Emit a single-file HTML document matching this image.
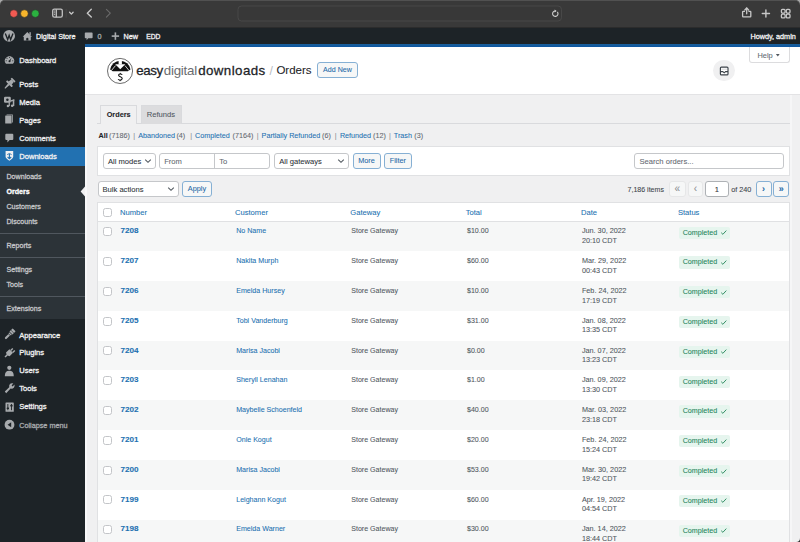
<!DOCTYPE html>
<html><head><meta charset="utf-8"><title>Orders</title>
<style>
html,body{margin:0;padding:0}
body{-webkit-text-stroke:0.07px;width:800px;height:542px;overflow:hidden;position:relative;background:#f0f0f1;font-family:"Liberation Sans",sans-serif}
.abs{position:absolute}
.t{position:absolute;white-space:nowrap;height:12px;line-height:12px}
#safari{position:absolute;left:0;top:0;width:800px;height:27.8px;background:#393939;border-radius:5px 5px 0 0;box-shadow:inset 0 0.8px 0 #5a5a5a}
#adminbar{position:absolute;left:0;top:27.8px;width:800px;height:16.2px;background:#1d2327}
#sidebar{position:absolute;left:0;top:44px;width:85px;height:498px;background:#1d2327}
.btn{position:absolute;box-sizing:border-box;border:1px solid #86b0d4;background:#f6f7f7;color:#1f6aa8;border-radius:3px;text-align:center;white-space:nowrap}
.pg{font-size:9px;line-height:14px;font-weight:700}
.pgd{box-sizing:border-box;border:1px solid #e6e7e8;background:#f6f7f7;color:#8c8f94;border-radius:3px;text-align:center;font-size:10px;line-height:14px}
.inp{box-sizing:border-box;border:1px solid #c5c7ca;background:#fff;border-radius:3px}
.cb{width:9px;height:9px;box-sizing:border-box;border:1px solid #c3c5c8;border-radius:2.5px;background:#fff}
.sub{color:#50575e}
.sub a{color:#2271b1}
.sub .c{color:#646970}
.sub .sep{color:#a7aaad;padding:0 1px}
.badge{height:12.3px;width:50.6px;background:#e6f5ee;border-radius:2px}
.ck{font-size:6.5px}
</style></head><body>
<div class="abs" style="left:0;top:0;width:800px;height:8px;background:#a9a9a9"></div>
<div id="safari"></div>
<svg class="abs" style="left:0;top:0" width="800" height="28" viewBox="0 0 800 28">
<circle cx="13.8" cy="13.6" r="3.8" fill="#f25a52" stroke="#2a2a2a" stroke-width="0.5"/>
<circle cx="24.4" cy="13.6" r="3.8" fill="#f6b42c" stroke="#2a2a2a" stroke-width="0.5"/>
<circle cx="35.3" cy="13.6" r="3.8" fill="#2bb140" stroke="#2a2a2a" stroke-width="0.5"/>
<g fill="none" stroke="#c2c2c2" stroke-width="1.3">
<rect x="52.7" y="9.2" width="9.6" height="8" rx="1.6"/>
<line x1="56.3" y1="9.2" x2="56.3" y2="17.2"/>
</g>
<g fill="#c2c2c2"><rect x="53.9" y="10.6" width="1.3" height="0.9"/><rect x="53.9" y="12.4" width="1.3" height="0.9"/><rect x="53.9" y="14.2" width="1.3" height="0.9"/></g>
<g fill="none" stroke="#c8c8c8" stroke-width="1.35" stroke-linecap="round" stroke-linejoin="round">
<polyline points="69.6,12.3 71.35,14.1 73.1,12.3"/>
<polyline points="91.3,9.3 87.3,13.2 91.3,17.1"/>
</g>
<polyline points="106.4,9.3 110.3,13.2 106.4,17.1" fill="none" stroke="#6b6b6b" stroke-width="1.1" stroke-linecap="round" stroke-linejoin="round"/>
<line x1="66.1" y1="8.8" x2="66.1" y2="17.8" stroke="#4a4a4a" stroke-width="0.8"/>
<rect x="238" y="6" width="323.5" height="15" rx="3.5" fill="#383838" stroke="#4b4b4b" stroke-width="0.9"/>
<g fill="none" stroke="#cfcfcf" stroke-width="1.1" stroke-linecap="round">
<path d="M557.6 12.3 A2.7 2.7 0 1 1 555.4 11"/>
</g>
<path d="M554.6 9.6 L556.6 11 L554.6 12.4 Z" fill="#cfcfcf"/>
<g fill="none" stroke="#c8c8c8" stroke-width="1.3" stroke-linecap="round" stroke-linejoin="round">
<path d="M744.4 11.4 H743.2 Q742.6 11.4 742.6 12 V16.2 Q742.6 16.8 743.2 16.8 H750.2 Q750.8 16.8 750.8 16.2 V12 Q750.8 11.4 750.2 11.4 H749"/>
<line x1="746.7" y1="8.2" x2="746.7" y2="13.8"/>
<polyline points="744.8,10 746.7,8 748.6,10"/>
<line x1="765.9" y1="9.9" x2="765.9" y2="17.1" stroke-width="1.4"/>
<line x1="762.3" y1="13.5" x2="769.5" y2="13.5" stroke-width="1.4"/>
<rect x="781.4" y="9.4" width="3.7" height="3.7" rx="1"/>
<rect x="786.3" y="9.4" width="3.7" height="3.7" rx="1"/>
<rect x="781.4" y="14.2" width="3.7" height="3.7" rx="1"/>
<rect x="786.3" y="14.2" width="3.7" height="3.7" rx="1"/>
</g>
<rect x="0" y="27.2" width="800" height="0.8" fill="#2a2a2a"/>
</svg>
<div id="adminbar"></div>
<svg class="abs" style="left:0;top:27px" width="800" height="17" viewBox="0 27 800 17">
<circle cx="9.1" cy="35.9" r="5.9" fill="#a7aaad"/>
<path d="M5.3 33.4 L7.7 39.6 L9.15 35.4 L10.6 39.6 L13 33.4" fill="none" stroke="#1d2327" stroke-width="1.35" stroke-linejoin="miter"/>
<path d="M22.7 36.8 L27.3 32 L31.9 36.8 H30.8 V40.6 H23.8 V36.8 Z" fill="#a7aaad"/>
<rect x="29.4" y="32.2" width="1.4" height="2.8" fill="#a7aaad"/>
<path d="M26.2 40.6 V38.8 A1.1 1.1 0 0 1 28.4 38.8 V40.6 Z" fill="#1d2327"/>
<path d="M84.8 33.2 Q84.8 32.4 85.6 32.4 H91.8 Q92.6 32.4 92.6 33.2 V37.4 Q92.6 38.2 91.8 38.2 H88.2 L86.6 40.2 V38.2 H85.6 Q84.8 38.2 84.8 37.4 Z" fill="#a7aaad"/>
<rect x="114.6" y="32.4" width="1.6" height="7.4" fill="#a7aaad"/>
<rect x="111.7" y="35.3" width="7.4" height="1.6" fill="#a7aaad"/>
</svg>
<div class="t" style="left:36px;top:31.10px;font-size:7.25px;color:#f0f0f1;font-weight:400;-webkit-text-stroke:0.3px">Digital Store</div>

<div class="t" style="left:97.4px;top:31.10px;font-size:7.25px;color:#a7aaad;font-weight:400;-webkit-text-stroke:0.3px">0</div>

<div class="t" style="left:123.6px;top:31.10px;font-size:7.25px;color:#f0f0f1;font-weight:400;-webkit-text-stroke:0.3px">New</div>

<div class="t" style="left:146.2px;top:31.10px;font-size:6.7px;color:#f0f0f1;font-weight:400;-webkit-text-stroke:0.3px">EDD</div>

<div class="t" style="left:750.4px;top:31.10px;font-size:7.25px;color:#f0f0f1;font-weight:400;-webkit-text-stroke:0.3px">Howdy, admin</div>

<div id="sidebar"></div>
<div class="abs" style="left:0;top:147.3px;width:85px;height:18.3px;background:#2271b1"></div>
<div class="abs" style="left:0;top:165.6px;width:85px;height:153.8px;background:#2c3338"></div>
<div class="abs" style="left:0;top:233px;width:85px;height:0.8px;background:#50575e"></div>
<div class="abs" style="left:0;top:257px;width:85px;height:0.8px;background:#50575e"></div>
<div class="abs" style="left:0;top:295.5px;width:85px;height:0.8px;background:#50575e"></div>
<svg class="abs" style="left:80px;top:186px" width="6" height="11" viewBox="0 0 6 11"><path d="M5 0.6 L0.6 5.5 L5 10.4 Z" fill="#f0f0f1"/></svg>
<div class="t" style="left:19.2px;top:54.70px;font-size:7.6px;color:#f0f0f1;font-weight:400;-webkit-text-stroke:0.3px">Dashboard</div>

<div class="t" style="left:19.2px;top:78.50px;font-size:7.6px;color:#f0f0f1;font-weight:400;-webkit-text-stroke:0.3px">Posts</div>

<div class="t" style="left:19.2px;top:96.70px;font-size:7.6px;color:#f0f0f1;font-weight:400;-webkit-text-stroke:0.3px">Media</div>

<div class="t" style="left:19.2px;top:115.00px;font-size:7.6px;color:#f0f0f1;font-weight:400;-webkit-text-stroke:0.3px">Pages</div>

<div class="t" style="left:19.2px;top:132.80px;font-size:7.6px;color:#f0f0f1;font-weight:400;-webkit-text-stroke:0.3px">Comments</div>

<div class="t" style="left:19.2px;top:151.10px;font-size:7.6px;color:#f0f0f1;font-weight:400;-webkit-text-stroke:0.3px">Downloads</div>

<div class="t" style="left:19.2px;top:329.60px;font-size:7.6px;color:#f0f0f1;font-weight:400;-webkit-text-stroke:0.3px">Appearance</div>

<div class="t" style="left:19.2px;top:347.20px;font-size:7.6px;color:#f0f0f1;font-weight:400;-webkit-text-stroke:0.3px">Plugins</div>

<div class="t" style="left:19.2px;top:365.40px;font-size:7.6px;color:#f0f0f1;font-weight:400;-webkit-text-stroke:0.3px">Users</div>

<div class="t" style="left:19.2px;top:383.40px;font-size:7.6px;color:#f0f0f1;font-weight:400;-webkit-text-stroke:0.3px">Tools</div>

<div class="t" style="left:19.2px;top:401.40px;font-size:7.6px;color:#f0f0f1;font-weight:400;-webkit-text-stroke:0.3px">Settings</div>

<div class="t" style="left:19.2px;top:419.60px;font-size:7.25px;color:#a7aaad;font-weight:400;-webkit-text-stroke:0.3px">Collapse menu</div>

<div class="t" style="left:6.5px;top:171.30px;font-size:7.1px;color:#c3c4c7;font-weight:400;-webkit-text-stroke:0.3px">Downloads</div>

<div class="t" style="left:6.5px;top:186.10px;font-size:7.1px;color:#ffffff;font-weight:700;-webkit-text-stroke:0.3px">Orders</div>

<div class="t" style="left:6.5px;top:201.10px;font-size:7.1px;color:#c3c4c7;font-weight:400;-webkit-text-stroke:0.3px">Customers</div>

<div class="t" style="left:6.5px;top:215.90px;font-size:7.1px;color:#c3c4c7;font-weight:400;-webkit-text-stroke:0.3px">Discounts</div>

<div class="t" style="left:6.5px;top:239.80px;font-size:7.1px;color:#c3c4c7;font-weight:400;-webkit-text-stroke:0.3px">Reports</div>

<div class="t" style="left:6.5px;top:263.80px;font-size:7.1px;color:#c3c4c7;font-weight:400;-webkit-text-stroke:0.3px">Settings</div>

<div class="t" style="left:6.5px;top:278.50px;font-size:7.1px;color:#c3c4c7;font-weight:400;-webkit-text-stroke:0.3px">Tools</div>

<div class="t" style="left:6.5px;top:302.50px;font-size:7.1px;color:#c3c4c7;font-weight:400;-webkit-text-stroke:0.3px">Extensions</div>

<svg class="abs" style="left:0;top:44px" width="20" height="400" viewBox="0 44 20 400">
<g fill="#a7aaad">
<path d="M6 63.8 A4.6 4.6 0 1 1 13 63.8 Z"/>
</g>
<g fill="#1d2327">
<circle cx="9.5" cy="61.2" r="1"/><path d="M9 61 L11.6 57.4 L10.1 61.5 Z"/>
<circle cx="9.5" cy="57.2" r="0.55"/><circle cx="7" cy="58.3" r="0.55"/><circle cx="6.2" cy="60.8" r="0.55"/><circle cx="12.8" cy="60.8" r="0.55"/>
</g>
<g fill="#a7aaad" transform="translate(9.5 83.7) rotate(45)">
<rect x="-2.6" y="-6" width="5.2" height="1.9" rx="0.5"/>
<path d="M-1.7 -4.2 L1.7 -4.2 L2.3 -0.6 L-2.3 -0.6 Z"/>
<rect x="-4" y="-0.9" width="8" height="1.9" rx="0.5"/>
<path d="M-1.1 0.9 L1.1 0.9 L0.5 6.6 L-0.5 6.6 Z"/>
</g>
<g fill="#a7aaad">
<path d="M4 98 Q4 96.8 5.2 96.8 H9.6 Q10.8 96.8 10.8 98 V101.6 Q10.8 102.8 9.6 102.8 H5.2 Q4 102.8 4 101.6 Z"/>
<rect x="12.8" y="99.6" width="1.5" height="6.4"/>
<path d="M10.6 100.2 L14.3 99.2 V100.8 L10.6 101.8 Z"/>
<circle cx="12.2" cy="105.8" r="1.3"/>
<rect x="8.6" y="102.2" width="1.3" height="4"/>
<circle cx="7.9" cy="106" r="1.2"/>
</g>
<circle cx="7.4" cy="99.8" r="1.25" fill="#1d2327"/>
<g fill="#a7aaad">
<rect x="5.2" y="115.6" width="6.4" height="8" rx="0.5"/>
<path d="M6.6 114.4 H12.8 V122.6 H12 V115.2 H6.6 Z"/>
<path d="M5.3 134.8 Q5.3 133.8 6.3 133.8 H12.3 Q13.3 133.8 13.3 134.8 V139 Q13.3 140 12.3 140 H9.6 L7.4 142.4 V140 H6.3 Q5.3 140 5.3 139 Z"/>
</g>
<path d="M5.6 151 H13.2 V156.6 Q13.2 158.6 9.4 160.8 Q5.6 158.6 5.6 156.6 Z" fill="#f0f0f1"/>
<path d="M7.2 154.6 Q9.4 152.4 11.6 154.6" fill="none" stroke="#2271b1" stroke-width="0.9"/>
<path d="M9.4 154 V158.6 M7.6 157 L9.4 158.8 L11.2 157" fill="none" stroke="#2271b1" stroke-width="1.1"/>
<g fill="#a7aaad">
<g transform="translate(9.6 334.4) rotate(45)" fill="#a7aaad">
<rect x="-2.1" y="-6.4" width="4.2" height="4.6" rx="0.5"/>
<rect x="-1.7" y="-1.5" width="3.4" height="1.4"/>
<rect x="-1.05" y="0.2" width="2.1" height="6" rx="1"/>
</g>
<g transform="translate(9.6 334.4) rotate(45)" fill="#1d2327"><rect x="-2.1" y="-4.2" width="4.2" height="0.45"/><rect x="-2.1" y="-1.8" width="4.2" height="0.35"/></g>
<g fill="#a7aaad">
<path d="M4.5 356.6 L6.6 354.5 L6 352.6 L9.4 349.2 L13 352.8 L9.6 356.2 L7.6 355.6 L5.6 357.4 Z"/>
<path d="M10.2 350 L12.3 347.9 L13.3 348.9 L11.2 351 Z"/>
<path d="M12.2 352 L14.3 349.9 L15.3 350.9 L13.2 353 Z"/>
<circle cx="9.3" cy="367.8" r="2.1"/>
<path d="M4.8 376.2 Q4.8 370.8 9.3 370.8 Q13.8 370.8 13.8 376.2 Z"/>
<path d="M4.8 391.6 L9.2 387.2 Q8.6 384.8 10.6 383.6 Q12 382.8 13.4 383.4 L11.6 385.2 L12.6 386.4 L14.5 384.6 Q14.9 386.2 14 387.4 Q12.6 389.2 10.6 388.6 L6.2 393.2 Z"/>
<rect x="5.5" y="402.4" width="8.3" height="9.4" rx="0.6"/>
<circle cx="9.5" cy="424.7" r="4.9"/>
</g>
<g fill="#1d2327">
<rect x="7.4" y="404" width="0.9" height="6.2"/><rect x="11" y="404" width="0.9" height="6.2"/>
<rect x="6.7" y="407.4" width="2.3" height="1.6" rx="0.5"/><rect x="10.3" y="404.8" width="2.3" height="1.6" rx="0.5"/>
<path d="M11.2 422.2 L7.6 424.7 L11.2 427.2 Z"/>
</g>
</svg>
<div class="abs" style="left:85px;top:44px;width:715px;height:2.8px;background:linear-gradient(#1d5f98,#0b56a2)"></div>
<div class="abs" style="left:85px;top:46.6px;width:715px;height:47px;background:#fff;border-bottom:1px solid #e3e3e5"></div>
<div class="abs" style="left:85px;top:94.6px;width:2.4px;height:448px;background:#f8f8f9"></div>
<svg class="abs" style="left:105px;top:55px" width="32" height="32" viewBox="105 55 32 32">
<circle cx="120.05" cy="70.95" r="12.55" fill="#fff" stroke="#505050" stroke-width="0.85"/>
<path d="M110.1 69.6 A10.3 10.3 0 0 1 130.5 69.6 L127.9 71.3 L112.7 71.3 Z" fill="#111"/>
<rect x="118.6" y="59.5" width="3.3" height="5" fill="#fff"/>
<path d="M115.2 64.2 L125.3 64.2 L120.25 69.3 Z" fill="#fff"/>
<path d="M111.4 70.6 L115.5 65.6 M129.1 70.6 L125 65.6" stroke="#fff" stroke-width="0.8"/>
<path d="M122.3 74.6 Q120.8 73.5 119.2 74.2 Q117.9 75.2 119.4 76.3 L121.5 77.4 Q123 78.6 121.4 79.8 Q119.7 80.6 118 79.4" fill="none" stroke="#111" stroke-width="1.05"/>
<path d="M120.3 72.9 V74 M120.1 80 V81.2" stroke="#111" stroke-width="0.9"/>
</svg>
<div class="t" style="left:136.2px;top:63.2px;font-size:13.3px;line-height:15px;height:15px;color:#1d2327"><span style="-webkit-text-stroke:0.28px #1d2327;letter-spacing:-0.4px">easy</span><span style="color:#6a6d70;-webkit-text-stroke:0;letter-spacing:-0.2px;margin-left:1px">digital</span><span style="-webkit-text-stroke:0.28px #1d2327;letter-spacing:0.42px;margin-left:1.2px">downloads</span></div>
<div class="t" style="left:269.6px;top:64.50px;font-size:12.2px;color:#b9bcbf;font-weight:400;-webkit-text-stroke:0">/</div>

<div class="t" style="left:276.4px;top:64.40px;font-size:11.5px;color:#1d2327;font-weight:400;">Orders</div>

<div class="btn" style="left:317px;top:61.6px;width:41px;height:16px;font-size:7.1px;line-height:15.9px">Add New</div>
<div class="abs" style="left:748.5px;top:46.6px;width:41px;height:16.6px;background:#fff;border:1px solid #dcdcde;border-top:0;border-radius:0 0 3px 3px;box-sizing:border-box"></div>
<div class="t" style="left:757.5px;top:49.60px;font-size:7.4px;color:#646970;font-weight:400;">Help</div>

<svg class="abs" style="left:775px;top:53px" width="6" height="5"><path d="M0.9 1.1 H4.7 L2.8 3.6 Z" fill="#50575e"/></svg>
<div class="abs" style="left:713px;top:59.7px;width:21.8px;height:21.8px;border-radius:50%;background:#f0f0f1"></div>
<svg class="abs" style="left:713px;top:60px" width="22" height="22" viewBox="0 0 22 22">
<rect x="7.4" y="7.1" width="7.6" height="7.8" rx="1" fill="#fff" stroke="#3c434a" stroke-width="1.15"/>
<rect x="8.4" y="8.6" width="5.6" height="1.2" fill="#dcdcde"/>
<path d="M7.4 11.6 H9.8 L11.2 12.9 L12.6 11.6 H15" fill="none" stroke="#3c434a" stroke-width="1.05"/>
</svg>
<div class="abs" style="left:97px;top:123.4px;width:692.5px;height:1px;background:#d9dadd"></div>
<div class="abs" style="left:100.4px;top:105px;width:36.8px;height:19.4px;background:#f0f0f1;border:1px solid #d9dadd;border-bottom:0;box-sizing:border-box"></div>
<div class="abs" style="left:141px;top:105px;width:40.8px;height:18.6px;background:#dcdcde;border:1px solid #d9dadd;border-bottom:0;box-sizing:border-box"></div>
<div class="t" style="left:106.7px;top:108.70px;font-size:7.3px;color:#1d2327;font-weight:700;">Orders</div>

<div class="t" style="left:146.8px;top:108.70px;font-size:7.6px;color:#50575e;font-weight:400;">Refunds</div>

<div class="t" style="left:98.5px;top:129.90px;font-size:7.2px;color:#1d2327;font-weight:700;">All</div>

<div class="t" style="left:109px;top:129.90px;font-size:7.2px;color:#646970;font-weight:400;">(7186)</div>

<div class="t" style="left:133.2px;top:129.90px;font-size:7.2px;color:#8c8f94;font-weight:400;">|</div>

<div class="t" style="left:138.25px;top:129.90px;font-size:7.2px;color:#2271b1;font-weight:400;">Abandoned</div>

<div class="t" style="left:176.4px;top:129.90px;font-size:7.2px;color:#646970;font-weight:400;">(4)</div>

<div class="t" style="left:190.2px;top:129.90px;font-size:7.2px;color:#8c8f94;font-weight:400;">|</div>

<div class="t" style="left:195px;top:129.90px;font-size:7.2px;color:#2271b1;font-weight:400;">Completed</div>

<div class="t" style="left:232.6px;top:129.90px;font-size:7.2px;color:#646970;font-weight:400;">(7164)</div>

<div class="t" style="left:256.8px;top:129.90px;font-size:7.2px;color:#8c8f94;font-weight:400;">|</div>

<div class="t" style="left:261.6px;top:129.90px;font-size:7.2px;color:#2271b1;font-weight:400;">Partially Refunded</div>

<div class="t" style="left:322px;top:129.90px;font-size:7.2px;color:#646970;font-weight:400;">(6)</div>

<div class="t" style="left:334.8px;top:129.90px;font-size:7.2px;color:#8c8f94;font-weight:400;">|</div>

<div class="t" style="left:339.9px;top:129.90px;font-size:7.2px;color:#2271b1;font-weight:400;">Refunded</div>

<div class="t" style="left:373px;top:129.90px;font-size:7.2px;color:#646970;font-weight:400;">(12)</div>

<div class="t" style="left:389.1px;top:129.90px;font-size:7.2px;color:#8c8f94;font-weight:400;">|</div>

<div class="t" style="left:393.8px;top:129.90px;font-size:7.2px;color:#2271b1;font-weight:400;">Trash</div>

<div class="t" style="left:414.3px;top:129.90px;font-size:7.2px;color:#646970;font-weight:400;">(3)</div>

<div class="abs" style="left:97px;top:146.3px;width:692.5px;height:29.8px;background:#fff;border:1px solid #e0e1e3;box-sizing:border-box"></div>
<div class="abs inp" style="left:103px;top:153px;width:52.5px;height:15.800000000000011px"></div><div class="t" style="left:108px;top:155.60px;font-size:7.6px;color:#2c3338;font-weight:400;">All modes</div>
<svg class="abs" style="left:143.5px;top:157.9px" width="8" height="6"><polyline points="1.2,1.7 4,4.3 6.8,1.7" fill="none" stroke="#50575e" stroke-width="1.1"/></svg>
<div class="abs inp" style="left:159.2px;top:153px;width:110.8px;height:15.8px"></div>
<div class="abs" style="left:214.4px;top:153px;width:0.9px;height:15.8px;background:#c5c7ca"></div>
<div class="t" style="left:164.2px;top:155.60px;font-size:7.6px;color:#646970;font-weight:400;">From</div>

<div class="t" style="left:219.2px;top:155.60px;font-size:7.6px;color:#646970;font-weight:400;">To</div>

<div class="abs inp" style="left:274.2px;top:153px;width:74.60000000000002px;height:15.800000000000011px"></div><div class="t" style="left:279.2px;top:155.60px;font-size:7.6px;color:#2c3338;font-weight:400;">All gateways</div>
<svg class="abs" style="left:336.8px;top:157.9px" width="8" height="6"><polyline points="1.2,1.7 4,4.3 6.8,1.7" fill="none" stroke="#50575e" stroke-width="1.1"/></svg>
<div class="btn" style="left:352.5px;top:153px;width:28px;height:15.8px;font-size:7.3px;line-height:14.9px">More</div>
<div class="btn" style="left:383.8px;top:153px;width:28px;height:15.8px;font-size:7.3px;line-height:14.9px">Filter</div>
<div class="abs inp" style="left:634.2px;top:153px;width:149.5px;height:15.8px"></div>
<div class="t" style="left:639.5px;top:155.60px;font-size:7.6px;color:#646970;font-weight:400;">Search orders...</div>

<div class="abs inp" style="left:97.5px;top:181.2px;width:81.30000000000001px;height:15.800000000000011px"></div><div class="t" style="left:102.5px;top:183.80px;font-size:7.6px;color:#2c3338;font-weight:400;">Bulk actions</div>
<svg class="abs" style="left:166.8px;top:186.1px" width="8" height="6"><polyline points="1.2,1.7 4,4.3 6.8,1.7" fill="none" stroke="#50575e" stroke-width="1.1"/></svg>
<div class="btn" style="left:182px;top:181.2px;width:30px;height:15.8px;font-size:7.3px;line-height:14.9px">Apply</div>
<div class="t" style="left:627.5px;top:183.80px;font-size:7.05px;color:#3c434a;font-weight:400;">7,186 items</div>

<div class="abs pgd" style="left:668.8px;top:181.2px;width:16.8px;height:15.8px">&laquo;</div>
<div class="abs pgd" style="left:687.5px;top:181.2px;width:15.6px;height:15.8px">&lsaquo;</div>
<div class="abs inp" style="left:705px;top:181px;width:23.6px;height:16.2px;border-color:#aeb1b5;text-align:center;font-size:7.6px;line-height:15.4px;color:#2c3338">1</div>
<div class="t" style="left:731.2px;top:183.80px;font-size:7.25px;color:#3c434a;font-weight:400;">of 240</div>

<div class="btn pg" style="left:755.5px;top:181.2px;width:16.2px;height:15.8px">&rsaquo;</div>
<div class="btn pg" style="left:773.2px;top:181.2px;width:16px;height:15.8px">&raquo;</div>
<div class="abs" style="left:97.4px;top:202.4px;width:692.2px;height:400px;background:#fff;border:1px solid #e0e1e3;box-sizing:border-box"></div>
<div class="abs" style="left:97.4px;top:220.6px;width:692.2px;height:1px;background:#e0e1e3"></div>
<div class="abs cb" style="left:103px;top:208px"></div>
<div class="t" style="left:120px;top:206.50px;font-size:7.6px;color:#2271b1;font-weight:400;">Number</div>

<div class="t" style="left:235px;top:206.50px;font-size:7.6px;color:#2271b1;font-weight:400;">Customer</div>

<div class="t" style="left:350.3px;top:206.50px;font-size:7.6px;color:#2271b1;font-weight:400;">Gateway</div>

<div class="t" style="left:465.7px;top:206.50px;font-size:7.6px;color:#2271b1;font-weight:400;">Total</div>

<div class="t" style="left:581px;top:206.50px;font-size:7.6px;color:#2271b1;font-weight:400;">Date</div>

<div class="t" style="left:677.9px;top:206.50px;font-size:7.6px;color:#2271b1;font-weight:400;">Status</div>

<div class="abs" style="left:98.3px;top:221.50px;width:690.4px;height:29.80px;background:#f6f7f7"></div>
<div class="abs cb" style="left:103px;top:227.20000000000002px"></div>
<div class="t" style="left:120.6px;top:225.40px;font-size:8.1px;color:#2271b1;font-weight:700;">7208</div>

<div class="t" style="left:236.2px;top:225.40px;font-size:7.1px;color:#2271b1;font-weight:400;">No Name</div>

<div class="t" style="left:351.3px;top:225.40px;font-size:7.05px;color:#50575e;font-weight:400;">Store Gateway</div>

<div class="t" style="left:467px;top:225.40px;font-size:7.05px;color:#50575e;font-weight:400;">$10.00</div>

<div class="t" style="left:581.9px;top:225.40px;font-size:7.25px;color:#50575e;font-weight:400;">Jun. 30, 2022</div>

<div class="t" style="left:581.9px;top:235.00px;font-size:7.25px;color:#50575e;font-weight:400;">20:10 CDT</div>

<div class="abs badge" style="left:679.3px;top:226.50px"></div>
<div class="t" style="left:682.7px;top:226.60px;font-size:7.15px;color:#22845a;font-weight:400;">Completed</div>

<svg class="abs" style="left:720px;top:229.20px" width="8" height="7" viewBox="0 0 8 7"><polyline points="1.2,3.7 2.9,5.3 6.3,1.6" fill="none" stroke="#2a8a5e" stroke-width="0.95"/></svg>
<div class="abs cb" style="left:103px;top:257.0px"></div>
<div class="t" style="left:120.6px;top:255.20px;font-size:8.1px;color:#2271b1;font-weight:700;">7207</div>

<div class="t" style="left:236.2px;top:255.20px;font-size:7.1px;color:#2271b1;font-weight:400;">Nakita Murph</div>

<div class="t" style="left:351.3px;top:255.20px;font-size:7.05px;color:#50575e;font-weight:400;">Store Gateway</div>

<div class="t" style="left:467px;top:255.20px;font-size:7.05px;color:#50575e;font-weight:400;">$60.00</div>

<div class="t" style="left:581.9px;top:255.20px;font-size:7.25px;color:#50575e;font-weight:400;">Mar. 29, 2022</div>

<div class="t" style="left:581.9px;top:264.80px;font-size:7.25px;color:#50575e;font-weight:400;">00:43 CDT</div>

<div class="abs badge" style="left:679.3px;top:256.30px"></div>
<div class="t" style="left:682.7px;top:256.40px;font-size:7.15px;color:#22845a;font-weight:400;">Completed</div>

<svg class="abs" style="left:720px;top:259.00px" width="8" height="7" viewBox="0 0 8 7"><polyline points="1.2,3.7 2.9,5.3 6.3,1.6" fill="none" stroke="#2a8a5e" stroke-width="0.95"/></svg>
<div class="abs" style="left:98.3px;top:281.10px;width:690.4px;height:29.80px;background:#f6f7f7"></div>
<div class="abs cb" style="left:103px;top:286.8px"></div>
<div class="t" style="left:120.6px;top:285.00px;font-size:8.1px;color:#2271b1;font-weight:700;">7206</div>

<div class="t" style="left:236.2px;top:285.00px;font-size:7.1px;color:#2271b1;font-weight:400;">Emelda Hursey</div>

<div class="t" style="left:351.3px;top:285.00px;font-size:7.05px;color:#50575e;font-weight:400;">Store Gateway</div>

<div class="t" style="left:467px;top:285.00px;font-size:7.05px;color:#50575e;font-weight:400;">$10.00</div>

<div class="t" style="left:581.9px;top:285.00px;font-size:7.25px;color:#50575e;font-weight:400;">Feb. 24, 2022</div>

<div class="t" style="left:581.9px;top:294.60px;font-size:7.25px;color:#50575e;font-weight:400;">17:19 CDT</div>

<div class="abs badge" style="left:679.3px;top:286.10px"></div>
<div class="t" style="left:682.7px;top:286.20px;font-size:7.15px;color:#22845a;font-weight:400;">Completed</div>

<svg class="abs" style="left:720px;top:288.80px" width="8" height="7" viewBox="0 0 8 7"><polyline points="1.2,3.7 2.9,5.3 6.3,1.6" fill="none" stroke="#2a8a5e" stroke-width="0.95"/></svg>
<div class="abs cb" style="left:103px;top:316.59999999999997px"></div>
<div class="t" style="left:120.6px;top:314.80px;font-size:8.1px;color:#2271b1;font-weight:700;">7205</div>

<div class="t" style="left:236.2px;top:314.80px;font-size:7.1px;color:#2271b1;font-weight:400;">Tobi Vanderburg</div>

<div class="t" style="left:351.3px;top:314.80px;font-size:7.05px;color:#50575e;font-weight:400;">Store Gateway</div>

<div class="t" style="left:467px;top:314.80px;font-size:7.05px;color:#50575e;font-weight:400;">$31.00</div>

<div class="t" style="left:581.9px;top:314.80px;font-size:7.25px;color:#50575e;font-weight:400;">Jan. 08, 2022</div>

<div class="t" style="left:581.9px;top:324.40px;font-size:7.25px;color:#50575e;font-weight:400;">13:35 CDT</div>

<div class="abs badge" style="left:679.3px;top:315.90px"></div>
<div class="t" style="left:682.7px;top:316.00px;font-size:7.15px;color:#22845a;font-weight:400;">Completed</div>

<svg class="abs" style="left:720px;top:318.60px" width="8" height="7" viewBox="0 0 8 7"><polyline points="1.2,3.7 2.9,5.3 6.3,1.6" fill="none" stroke="#2a8a5e" stroke-width="0.95"/></svg>
<div class="abs" style="left:98.3px;top:340.70px;width:690.4px;height:29.80px;background:#f6f7f7"></div>
<div class="abs cb" style="left:103px;top:346.4px"></div>
<div class="t" style="left:120.6px;top:344.60px;font-size:8.1px;color:#2271b1;font-weight:700;">7204</div>

<div class="t" style="left:236.2px;top:344.60px;font-size:7.1px;color:#2271b1;font-weight:400;">Marisa Jacobi</div>

<div class="t" style="left:351.3px;top:344.60px;font-size:7.05px;color:#50575e;font-weight:400;">Store Gateway</div>

<div class="t" style="left:467px;top:344.60px;font-size:7.05px;color:#50575e;font-weight:400;">$0.00</div>

<div class="t" style="left:581.9px;top:344.60px;font-size:7.25px;color:#50575e;font-weight:400;">Jan. 07, 2022</div>

<div class="t" style="left:581.9px;top:354.20px;font-size:7.25px;color:#50575e;font-weight:400;">13:23 CDT</div>

<div class="abs badge" style="left:679.3px;top:345.70px"></div>
<div class="t" style="left:682.7px;top:345.80px;font-size:7.15px;color:#22845a;font-weight:400;">Completed</div>

<svg class="abs" style="left:720px;top:348.40px" width="8" height="7" viewBox="0 0 8 7"><polyline points="1.2,3.7 2.9,5.3 6.3,1.6" fill="none" stroke="#2a8a5e" stroke-width="0.95"/></svg>
<div class="abs cb" style="left:103px;top:376.2px"></div>
<div class="t" style="left:120.6px;top:374.40px;font-size:8.1px;color:#2271b1;font-weight:700;">7203</div>

<div class="t" style="left:236.2px;top:374.40px;font-size:7.1px;color:#2271b1;font-weight:400;">Sheryll Lenahan</div>

<div class="t" style="left:351.3px;top:374.40px;font-size:7.05px;color:#50575e;font-weight:400;">Store Gateway</div>

<div class="t" style="left:467px;top:374.40px;font-size:7.05px;color:#50575e;font-weight:400;">$1.00</div>

<div class="t" style="left:581.9px;top:374.40px;font-size:7.25px;color:#50575e;font-weight:400;">Jan. 09, 2022</div>

<div class="t" style="left:581.9px;top:384.00px;font-size:7.25px;color:#50575e;font-weight:400;">13:30 CDT</div>

<div class="abs badge" style="left:679.3px;top:375.50px"></div>
<div class="t" style="left:682.7px;top:375.60px;font-size:7.15px;color:#22845a;font-weight:400;">Completed</div>

<svg class="abs" style="left:720px;top:378.20px" width="8" height="7" viewBox="0 0 8 7"><polyline points="1.2,3.7 2.9,5.3 6.3,1.6" fill="none" stroke="#2a8a5e" stroke-width="0.95"/></svg>
<div class="abs" style="left:98.3px;top:400.30px;width:690.4px;height:29.80px;background:#f6f7f7"></div>
<div class="abs cb" style="left:103px;top:406.0px"></div>
<div class="t" style="left:120.6px;top:404.20px;font-size:8.1px;color:#2271b1;font-weight:700;">7202</div>

<div class="t" style="left:236.2px;top:404.20px;font-size:7.1px;color:#2271b1;font-weight:400;">Maybelle Schoenfeld</div>

<div class="t" style="left:351.3px;top:404.20px;font-size:7.05px;color:#50575e;font-weight:400;">Store Gateway</div>

<div class="t" style="left:467px;top:404.20px;font-size:7.05px;color:#50575e;font-weight:400;">$40.00</div>

<div class="t" style="left:581.9px;top:404.20px;font-size:7.25px;color:#50575e;font-weight:400;">Mar. 03, 2022</div>

<div class="t" style="left:581.9px;top:413.80px;font-size:7.25px;color:#50575e;font-weight:400;">23:18 CDT</div>

<div class="abs badge" style="left:679.3px;top:405.30px"></div>
<div class="t" style="left:682.7px;top:405.40px;font-size:7.15px;color:#22845a;font-weight:400;">Completed</div>

<svg class="abs" style="left:720px;top:408.00px" width="8" height="7" viewBox="0 0 8 7"><polyline points="1.2,3.7 2.9,5.3 6.3,1.6" fill="none" stroke="#2a8a5e" stroke-width="0.95"/></svg>
<div class="abs cb" style="left:103px;top:435.8px"></div>
<div class="t" style="left:120.6px;top:434.00px;font-size:8.1px;color:#2271b1;font-weight:700;">7201</div>

<div class="t" style="left:236.2px;top:434.00px;font-size:7.1px;color:#2271b1;font-weight:400;">Onie Kogut</div>

<div class="t" style="left:351.3px;top:434.00px;font-size:7.05px;color:#50575e;font-weight:400;">Store Gateway</div>

<div class="t" style="left:467px;top:434.00px;font-size:7.05px;color:#50575e;font-weight:400;">$20.00</div>

<div class="t" style="left:581.9px;top:434.00px;font-size:7.25px;color:#50575e;font-weight:400;">Feb. 24, 2022</div>

<div class="t" style="left:581.9px;top:443.60px;font-size:7.25px;color:#50575e;font-weight:400;">15:24 CDT</div>

<div class="abs badge" style="left:679.3px;top:435.10px"></div>
<div class="t" style="left:682.7px;top:435.20px;font-size:7.15px;color:#22845a;font-weight:400;">Completed</div>

<svg class="abs" style="left:720px;top:437.80px" width="8" height="7" viewBox="0 0 8 7"><polyline points="1.2,3.7 2.9,5.3 6.3,1.6" fill="none" stroke="#2a8a5e" stroke-width="0.95"/></svg>
<div class="abs" style="left:98.3px;top:459.90px;width:690.4px;height:29.80px;background:#f6f7f7"></div>
<div class="abs cb" style="left:103px;top:465.59999999999997px"></div>
<div class="t" style="left:120.6px;top:463.80px;font-size:8.1px;color:#2271b1;font-weight:700;">7200</div>

<div class="t" style="left:236.2px;top:463.80px;font-size:7.1px;color:#2271b1;font-weight:400;">Marisa Jacobi</div>

<div class="t" style="left:351.3px;top:463.80px;font-size:7.05px;color:#50575e;font-weight:400;">Store Gateway</div>

<div class="t" style="left:467px;top:463.80px;font-size:7.05px;color:#50575e;font-weight:400;">$53.00</div>

<div class="t" style="left:581.9px;top:463.80px;font-size:7.25px;color:#50575e;font-weight:400;">Mar. 30, 2022</div>

<div class="t" style="left:581.9px;top:473.40px;font-size:7.25px;color:#50575e;font-weight:400;">19:42 CDT</div>

<div class="abs badge" style="left:679.3px;top:464.90px"></div>
<div class="t" style="left:682.7px;top:465.00px;font-size:7.15px;color:#22845a;font-weight:400;">Completed</div>

<svg class="abs" style="left:720px;top:467.60px" width="8" height="7" viewBox="0 0 8 7"><polyline points="1.2,3.7 2.9,5.3 6.3,1.6" fill="none" stroke="#2a8a5e" stroke-width="0.95"/></svg>
<div class="abs cb" style="left:103px;top:495.4px"></div>
<div class="t" style="left:120.6px;top:493.60px;font-size:8.1px;color:#2271b1;font-weight:700;">7199</div>

<div class="t" style="left:236.2px;top:493.60px;font-size:7.1px;color:#2271b1;font-weight:400;">Leighann Kogut</div>

<div class="t" style="left:351.3px;top:493.60px;font-size:7.05px;color:#50575e;font-weight:400;">Store Gateway</div>

<div class="t" style="left:467px;top:493.60px;font-size:7.05px;color:#50575e;font-weight:400;">$60.00</div>

<div class="t" style="left:581.9px;top:493.60px;font-size:7.25px;color:#50575e;font-weight:400;">Apr. 19, 2022</div>

<div class="t" style="left:581.9px;top:503.20px;font-size:7.25px;color:#50575e;font-weight:400;">04:54 CDT</div>

<div class="abs badge" style="left:679.3px;top:494.70px"></div>
<div class="t" style="left:682.7px;top:494.80px;font-size:7.15px;color:#22845a;font-weight:400;">Completed</div>

<svg class="abs" style="left:720px;top:497.40px" width="8" height="7" viewBox="0 0 8 7"><polyline points="1.2,3.7 2.9,5.3 6.3,1.6" fill="none" stroke="#2a8a5e" stroke-width="0.95"/></svg>
<div class="abs" style="left:98.3px;top:519.50px;width:690.4px;height:29.80px;background:#f6f7f7"></div>
<div class="abs cb" style="left:103px;top:525.1999999999999px"></div>
<div class="t" style="left:120.6px;top:523.40px;font-size:8.1px;color:#2271b1;font-weight:700;">7198</div>

<div class="t" style="left:236.2px;top:523.40px;font-size:7.1px;color:#2271b1;font-weight:400;">Emelda Warner</div>

<div class="t" style="left:351.3px;top:523.40px;font-size:7.05px;color:#50575e;font-weight:400;">Store Gateway</div>

<div class="t" style="left:467px;top:523.40px;font-size:7.05px;color:#50575e;font-weight:400;">$30.00</div>

<div class="t" style="left:581.9px;top:523.40px;font-size:7.25px;color:#50575e;font-weight:400;">Jan. 14, 2022</div>

<div class="t" style="left:581.9px;top:533.00px;font-size:7.25px;color:#50575e;font-weight:400;">18:44 CDT</div>

<div class="abs badge" style="left:679.3px;top:524.50px"></div>
<div class="t" style="left:682.7px;top:524.60px;font-size:7.15px;color:#22845a;font-weight:400;">Completed</div>

<svg class="abs" style="left:720px;top:527.20px" width="8" height="7" viewBox="0 0 8 7"><polyline points="1.2,3.7 2.9,5.3 6.3,1.6" fill="none" stroke="#2a8a5e" stroke-width="0.95"/></svg>
<div class="abs" style="left:790px;top:95px;width:2.4px;height:447px;background:#f6f6f7"></div>
<svg class="abs" style="left:796px;top:538px" width="4" height="4" viewBox="0 0 4 4"><path d="M4 0 A4 4 0 0 1 0 4 H4 Z" fill="#333"/></svg>
</body></html>
